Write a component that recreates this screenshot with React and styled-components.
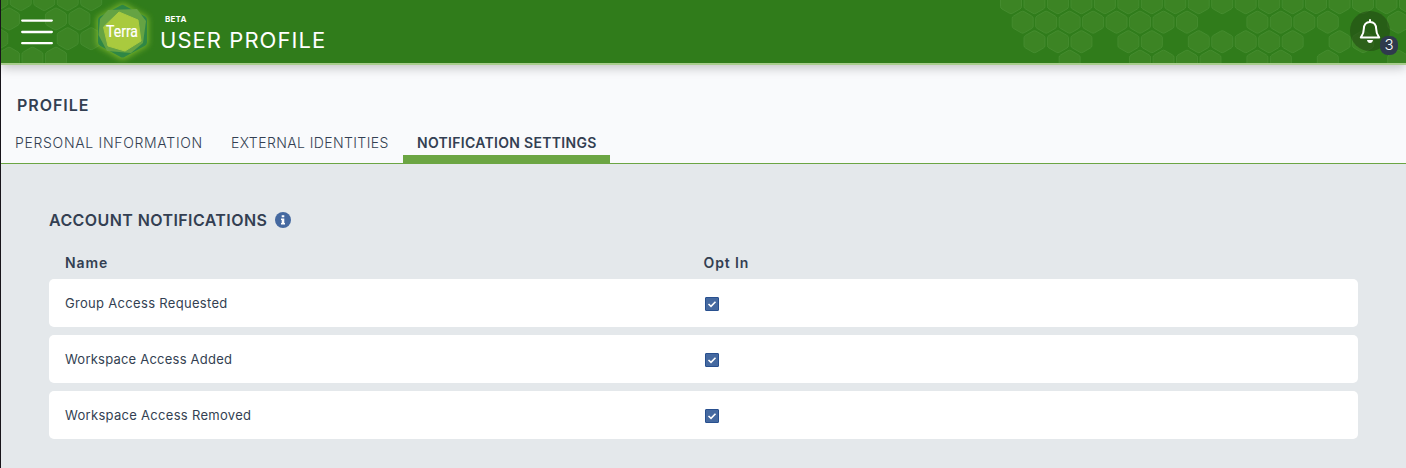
import React, { useState } from "react";
import styled, { createGlobalStyle } from "styled-components";

const Global = createGlobalStyle`
  * { box-sizing: border-box; }
  body { margin: 0; background: #e4e8eb; font-family: Inter, "Open Sans", sans-serif; color: #333f52; }
  button { font: inherit; color: inherit; border: 0; padding: 0; background: none; cursor: pointer; }
`;

const Page = styled.div`
  display: flex;
  flex-direction: column;
  height: 468px;
  overflow: hidden;
  border-left: 1px solid #17141a;
`;

const Header = styled.header`
  position: relative;
  z-index: 1;
  flex: none;
  height: 65px;
  display: flex;
  align-items: center;
  background: #307c1b;
  border-bottom: 2px solid #a9cd8e;
  box-shadow: 0 3px 10px rgba(0, 0, 0, 0.22);
`;

const Pattern = styled.svg`
  position: absolute;
  inset: 0;
  width: 1405px;
  height: 63px;
`;

const MenuButton = styled.button`
  position: relative;
  margin-left: 20px;
  width: 32px;
  height: 63px;
  svg { display: block; }
`;

const Logo = styled.svg`
  position: relative;
  width: 72px;
  height: 63px;
  margin-left: 33px;
  overflow: hidden;
`;

const Titles = styled.div`
  position: relative;
  align-self: flex-start;
  display: flex;
  flex-direction: column;
  margin-left: 2px;
  padding-top: 14px;
  color: #fff;
`;

const Beta = styled.span`
  padding-left: 5px;
  font-size: 8px;
  line-height: 10px;
  font-weight: 700;
  letter-spacing: 0.2px;
`;

const Title = styled.h1`
  margin: 3px 0 0;
  font-size: 22px;
  line-height: 26px;
  font-weight: 400;
  letter-spacing: 1.05px;
`;

const Bell = styled.button`
  position: relative;
  align-self: flex-start;
  margin-top: 11px;
  margin-left: auto;
  margin-right: 16px;
  width: 40px;
  height: 40px;
  border-radius: 50%;
  background: rgba(32, 70, 18, 0.55);
  svg { display: block; }
`;

const Count = styled.span`
  position: absolute;
  left: 30px;
  top: 25px;
  width: 18px;
  height: 19px;
  border-radius: 8px;
  background: #2f3a4d;
  color: #fff;
  font-size: 15px;
  line-height: 18px;
  font-weight: 300;
  text-align: center;
`;

const Top = styled.section`
  flex: none;
  height: 99px;
  display: flex;
  flex-direction: column;
  background: #f9fafc;
  border-bottom: 1px solid #6ba543;
`;

const Heading = styled.h2`
  margin: 0;
  font-size: 16px;
  line-height: 20px;
  font-weight: 600;
  letter-spacing: ${(p) => p.$spacing}px;
`;

const TopHeading = styled(Heading)`
  padding: 30px 0 0 16px;
`;

const Tabs = styled.nav`
  display: flex;
  margin-top: auto;
`;

const Tab = styled.button`
  width: ${(p) => p.$width}px;
  height: 40px;
  padding: 8px 0 0 14px;
  text-align: left;
  white-space: nowrap;
  font-size: 14px;
  line-height: 24px;
  font-weight: ${(p) => (p.$active ? 600 : 350)};
  letter-spacing: ${(p) => p.$spacing}px;
  border-bottom: 8px solid ${(p) => (p.$active ? "#6ba543" : "transparent")};
`;

const Content = styled.main`
  padding: 46px 48px 0;
`;

const HeadingGroup = styled.div`
  display: flex;
  align-items: center;
  justify-content: space-between;
  width: 242px;
  height: 20px;
  white-space: nowrap;
`;

const Info = styled.svg`
  flex: none;
  width: 16px;
  height: 16px;
`;

const Columns = styled.div`
  display: grid;
  grid-template-columns: 638.5px 1fr;
  align-items: center;
  padding: 0 16px;
`;

const TableHead = styled(Columns)`
  height: 30px;
  margin: 17px 0 2px;
  font-size: 14px;
  font-weight: 600;
  letter-spacing: 0.9px;
`;

const Row = styled(Columns)`
  height: 48px;
  margin-bottom: 8px;
  border-radius: 5px;
  background: #fff;
`;

const Name = styled.span`
  font-size: 13px;
  font-weight: 375;
  letter-spacing: ${(p) => p.$spacing}px;
`;

const Check = styled.button`
  display: flex;
  width: 14px;
  height: 14px;
  margin: 2px 0 0 1.5px;
  border: 1px solid #28508f;
  border-radius: 1px;
  background: ${(p) => (p.$on ? "#4569a0" : "#fff")};
`;

const PITCH = 23.47;
const cellRow = (x, y, ks) => ks.map((k) => [x + k * PITCH - 1, y]);
const CELLS = [
  ...cellRow(1011, 2.7, [...Array(18).keys()]),
  ...cellRow(1022.7, 22.2, [0, 1, 2, 3, 4, 5, 6, 7, 10, 11, 12, 13, 16]),
  ...cellRow(1034.5, 41.7, [0, 1, 2, 4, 5, 7, 8, 9, 10, 11, 13, 14]),
  ...cellRow(1022.7, 61.2, [2, 5, 6, 7, 8, 10, 11, 13, 16]),
  ...cellRow(-2.7, -0.5, [0, 1, 2, 3, 4]),
  ...cellRow(9, 19, [0, 2, 3]),
  ...cellRow(-2.7, 38.7, [0, 3, 4]),
  ...cellRow(9, 58.2, [0, 1, 2]),
];

const HexPattern = () => (
  <Pattern viewBox="0 0 1405 63" aria-hidden="true">
    {CELLS.map(([x, y], i) => (
      <path
        key={i}
        transform={`translate(${x} ${y})`}
        d="M-1.5-10.6Q0-11.4 1.5-10.6L9-6.3Q10.5-5.4 10.5-4V4Q10.5 5.4 9 6.3L1.5 10.6Q0 11.4-1.5 10.6L-9 6.3Q-10.5 5.4-10.5 4V-4Q-10.5-5.4-9-6.3Z"
        fill="#3c8424"
        stroke="#488e32"
        strokeWidth=".8"
      />
    ))}
  </Pattern>
);

const TerraLogo = () => (
  <Logo viewBox="86 0 72 63" aria-label="Terra">
    <defs>
      <filter id="glow" x="-40%" y="-40%" width="180%" height="180%">
        <feGaussianBlur stdDeviation="3.2" />
      </filter>
    </defs>
    <path d="M122.500 3L148 17.500V45L122.500 60L97 45V17.500Z" fill="#9acb32" opacity=".75" filter="url(#glow)" />
    <path d="M120.500 5.500Q122.500 4.200 124.500 5.500L145 16.500Q147 17.600 147 20V42.500Q147 44.500 145 45.700L124.500 57Q122.500 58.200 120.500 57L100 45.700Q98 44.500 98 42.500V20Q98 17.600 100 16.500Z" fill="#2f8745" />
    <path d="M108 10L137 9L146 21L143 43L131 53L107 51L98.500 35L100 19Z" fill="#65a343" />
    <path d="M119 12L138 20L141 41L125 51L108 46L103.500 27Z" fill="#a9ca3e" stroke="#a9ca3e" strokeLinejoin="round" />
    <text x="106" y="36.500" fill="#fff" fontFamily="Roboto, sans-serif" fontSize="16.500" stroke="#fff" strokeWidth=".2" textLength="32" lengthAdjust="spacingAndGlyphs">Terra</text>
  </Logo>
);

const TABS = [
  { label: "PERSONAL INFORMATION", width: 216, spacing: 0.69 },
  { label: "EXTERNAL IDENTITIES", width: 186, spacing: 0.4 },
  { label: "NOTIFICATION SETTINGS", width: 207, spacing: 0.3 },
];

const ROWS = [
  { label: "Group Access Requested", spacing: 0.31 },
  { label: "Workspace Access Added", spacing: 0.22 },
  { label: "Workspace Access Removed", spacing: 0.3 },
];

export default function App() {
  const [tab, setTab] = useState(2);
  const [on, setOn] = useState([true, true, true]);
  return (
    <>
      <Global />
      <Page>
        <Header>
          <HexPattern />
          <MenuButton aria-label="Menu">
            <svg width="32" height="63" viewBox="0 0 32 63" stroke="#fff" strokeWidth="2.300" strokeLinecap="round">
              <path d="M1.200 20.600H30.800M1.200 32H30.800M1.200 43.200H30.800" />
            </svg>
          </MenuButton>
          <TerraLogo />
          <Titles>
            <Beta>BETA</Beta>
            <Title>USER PROFILE</Title>
          </Titles>
          <Bell aria-label="Notifications">
            <svg width="40" height="40" viewBox="0 0 40 40" fill="none" stroke="#fff" strokeWidth="2" strokeLinejoin="round" strokeLinecap="round">
              <path d="M20 9V11M20 11C16 11 13.800 14 13.800 18C13.800 22.500 12.500 24 10.800 26.500H29.200C27.500 24 26.200 22.500 26.200 18C26.200 14 24 11 20 11Z" />
              <path d="M17 29H23Q22.500 32 20 32T17 29Z" fill="#fff" stroke="none" />
            </svg>
            <Count>3</Count>
          </Bell>
        </Header>
        <Top>
          <TopHeading $spacing={0.95}>PROFILE</TopHeading>
          <Tabs>
            {TABS.map((t, i) => (
              <Tab key={t.label} $width={t.width} $spacing={t.spacing} $active={i === tab} onClick={() => setTab(i)}>
                {t.label}
              </Tab>
            ))}
          </Tabs>
        </Top>
        <Content>
          <HeadingGroup>
            <Heading $spacing={0.41}>ACCOUNT NOTIFICATIONS</Heading>
            <Info viewBox="0 0 16 16">
              <circle cx="8" cy="8" r="8" fill="#4569a0" />
              <path d="M6.700 3.200H9.300V5.300H6.700ZM6 6.500H9.300V11H10V12.400H6V11H6.700V7.900H6Z" fill="#fff" />
            </Info>
          </HeadingGroup>
          <TableHead><span>Name</span><span>Opt In</span></TableHead>
          {ROWS.map((r, i) => (
            <Row key={r.label}>
              <Name $spacing={r.spacing}>{r.label}</Name>
              <Check
                role="checkbox"
                aria-checked={on[i]}
                aria-label={r.label}
                $on={on[i]}
                onClick={() => setOn(on.map((v, j) => (j === i ? !v : v)))}
              >
                {on[i] && (
                  <svg width="12" height="12" viewBox="0 0 12 12" fill="none" stroke="#fff" strokeWidth="1.600">
                    <path d="M2.500 6L5 8.300L9.500 3.800" />
                  </svg>
                )}
              </Check>
            </Row>
          ))}
        </Content>
      </Page>
    </>
  );
}
